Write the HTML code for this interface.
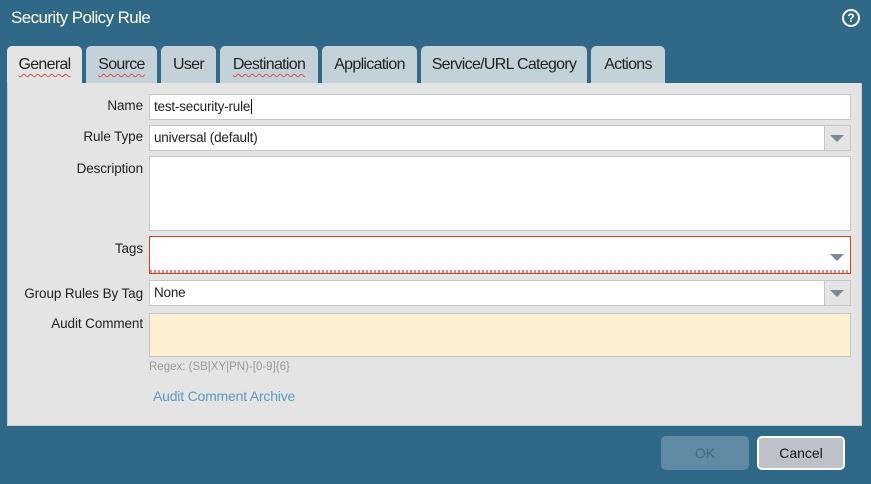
<!DOCTYPE html>
<html><head><style>
*{box-sizing:border-box;margin:0;padding:0}
body{width:871px;height:484px;background:#306987;font-family:"Liberation Sans",sans-serif;position:relative;overflow:hidden;font-size:13px;color:#222}
.a{position:absolute}
.title{left:11px;top:8px;color:#fff;font-size:17px;letter-spacing:-0.6px}
.help{left:842px;top:9px;width:18px;height:18px;border-radius:50%;background:#fff;}
.help div{position:absolute;left:2px;top:2px;width:14px;height:14px;border-radius:50%;background:#306987;color:#fff;font-size:12px;font-weight:bold;text-align:center;line-height:14px}
.tab{top:46px;height:37px;background:#c3d2d9;border-radius:5px 5px 0 0;font-size:16px;text-align:center;line-height:37px;color:#222;letter-spacing:-0.7px}
.tab.on{background:#e4e4e4}
.sq{text-decoration:underline wavy #e05050;text-decoration-thickness:1px;text-underline-offset:4px}
.panel{left:7px;top:83px;width:855px;height:343px;background:#e4e4e4;border:1px solid #ccc;border-top:none}
.lbl{right:728px;text-align:right;font-size:13.5px;letter-spacing:-0.1px}
.f{left:149px;width:702px;background:#fff;border:1px solid #c6c6c6;font-size:13.5px;padding-left:4px;letter-spacing:-0.2px}
.dd{position:absolute;right:0;top:0;bottom:0;width:26px;background:#e4e4e4;border-left:1px solid #c6c6c6}
.tri{position:absolute;width:0;height:0;border-left:7px solid transparent;border-right:7px solid transparent;border-top:7px solid #7a8a96}
.btn{top:436px;height:34px;border-radius:5px;text-align:center;line-height:34px;font-size:14px}
</style></head><body>
<div class="a title">Security Policy Rule</div>
<div class="a help"><div>?</div></div>
<div class="a tab on" style="left:7px;width:75px"><span class="sq">General</span></div>
<div class="a tab" style="left:86px;width:71px"><span class="sq">Source</span></div>
<div class="a tab" style="left:161px;width:55px">User</div>
<div class="a tab" style="left:220px;width:98px"><span class="sq">Destination</span></div>
<div class="a tab" style="left:322px;width:95px">Application</div>
<div class="a tab" style="left:421px;width:166px">Service/URL Category</div>
<div class="a tab" style="left:591px;width:74px">Actions</div>
<div class="a panel"></div>
<div class="a lbl" style="top:98px">Name</div>
<div class="a f" style="top:94px;height:26px;line-height:24px">test-security-rule<span style="border-left:1px solid #000;margin-left:1px"></span></div>
<div class="a lbl" style="top:129px">Rule Type</div>
<div class="a f" style="top:125px;height:26px;line-height:24px">universal (default)<div class="dd"><div class="tri" style="left:5px;top:9px"></div></div></div>
<div class="a lbl" style="top:161px">Description</div>
<div class="a f" style="top:156px;height:75px"></div>
<div class="a lbl" style="top:241px">Tags</div>
<div class="a f" style="top:236px;height:38px;border-color:#d9401a"><div class="tri" style="right:6px;top:17px"></div><div style="position:absolute;left:0;right:0;bottom:0;height:3px;background:repeating-linear-gradient(90deg,#f08080 0 2px,#fff 2px 4px)"></div></div>
<div class="a lbl" style="top:286px">Group Rules By Tag</div>
<div class="a f" style="top:280px;height:26px;line-height:24px">None<div class="dd"><div class="tri" style="left:5px;top:9px"></div></div></div>
<div class="a lbl" style="top:316px">Audit Comment</div>
<div class="a f" style="top:313px;height:44px;background:#fdf0d2"></div>
<div class="a" style="left:149px;top:361px;font-size:11.5px;color:#999">Regex: (SB|XY|PN)-[0-9]{6}</div>
<div class="a" style="left:153px;top:388px;font-size:14px;color:#5b9bc0;letter-spacing:-0.2px">Audit Comment Archive</div>
<div class="a btn" style="left:661px;width:88px;background:#5f8ca4;color:#456a80">OK</div>
<div class="a btn" style="left:757px;width:88px;background:#bdc1c9;border:2px solid #fff;line-height:30px;color:#111">Cancel</div>
</body></html>
